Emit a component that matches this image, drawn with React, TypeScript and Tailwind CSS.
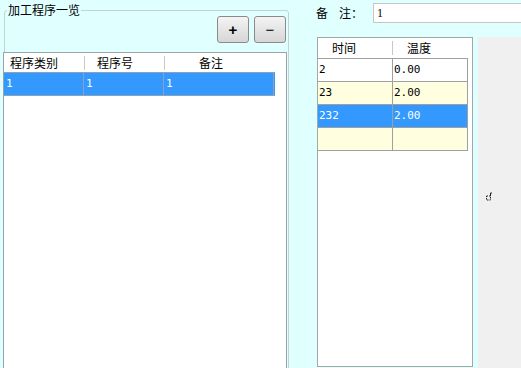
import React from 'react';

const cjk = { fontFamily: '"Noto Sans CJK SC", "Noto Sans", sans-serif' };
const mono = { fontFamily: '"DejaVu Sans Mono", "Liberation Mono", monospace' };

interface TempRow {
  time: string;
  temp: string;
  tone: 'white' | 'yellow' | 'selected';
}

const tempRows: TempRow[] = [
  { time: '2', temp: '0.00', tone: 'white' },
  { time: '23', temp: '2.00', tone: 'yellow' },
  { time: '232', temp: '2.00', tone: 'selected' },
  { time: '', temp: '', tone: 'yellow' },
];

function rowBg(tone: TempRow['tone']) {
  if (tone === 'selected') return 'bg-[#3399ff] text-white';
  if (tone === 'yellow') return 'bg-[#ffffe0] text-black';
  return 'bg-white text-black';
}

function ToolButton({ label, bold }: { label: string; bold?: boolean }) {
  return (
    <button
      className={`w-[32px] h-[27px] rounded-[3px] border border-[#8a8a8a] bg-gradient-to-b from-[#f4f4f4] to-[#d6d6d6] flex items-center justify-center text-[15px] leading-none text-black ${bold ? 'font-bold' : ''}`}
      style={{ fontFamily: '"Liberation Sans", sans-serif' }}
    >
      {label}
    </button>
  );
}

export default function App() {
  return (
    <div className="w-[521px] h-[368px] overflow-hidden bg-[#e0ffff] flex text-[12px] text-black" style={cjk}>
      {/* left: program list group */}
      <div className="w-[290px] shrink-0 pl-[4px] pt-[4px]">
        <fieldset className="m-0 p-0 w-[285px] h-[400px] border border-[#c4d2d2] rounded-[3px]">
          <legend className="ml-[2px] px-[1px] leading-[12px] text-[12px]">加工程序一览</legend>

          <div className="flex justify-end gap-[5px] pr-[2px]">
            <ToolButton label="+" bold />
            <ToolButton label="−" />
          </div>

          <div className="mt-[9px] -ml-[2px] w-[284px] h-[340px] border border-[#9aa4a8] bg-white">
            <div className="flex h-[19px] items-center bg-white">
              <div className="w-[80px] pl-[6px] leading-[19px]">程序类别</div>
              <span className="w-px h-[14px] bg-[#c8c8c8]" />
              <div className="w-[79px] pl-[12px] leading-[19px]">程序号</div>
              <span className="w-px h-[14px] bg-[#c8c8c8]" />
              <div className="w-[109px] pl-[34px] leading-[19px]">备注</div>
            </div>
            <div className="flex w-[271px] h-[24px] bg-[#3399ff] text-white border-y border-[#8aa2bc]" style={mono}>
              <div className="w-[80px] pl-[2px] leading-[22px] border-r border-[#8aa2bc] text-[11px]">1</div>
              <div className="w-[80px] pl-[2px] leading-[22px] border-r border-[#8aa2bc] text-[11px]">1</div>
              <div className="w-[110px] pl-[2px] leading-[22px] border-r border-[#8aa2bc] text-[11px]">1</div>
            </div>
          </div>
        </fieldset>
      </div>

      {/* right: note + temperature table */}
      <div className="flex-1 flex flex-col">
        <div className="flex items-center h-[20px] mt-[3px]">
          <span className="ml-[26px] w-[23px]">备</span>
          <span>注：</span>
          <input
            readOnly
            value="1"
            className="ml-[10px] flex-1 h-[20px] border border-[#c6c6c6] bg-white px-[3px] text-[12px] outline-none"
            style={{ fontFamily: '"Liberation Serif", serif' }}
          />
        </div>

        <div className="flex flex-1 mt-[14px]">
          <div className="ml-[27px] w-[156px] h-[330px] border border-[#a0a8a8] bg-white flex flex-col">
            <div className="w-[150px] flex h-[21px] items-center border-b border-[#a0a0a0]">
              <div className="w-[74px] pl-[14px] leading-[20px]">时间</div>
              <span className="w-px h-[14px] bg-[#c8c8c8]" />
              <div className="w-[75px] pl-[14px] leading-[20px]">温度</div>
            </div>
            {tempRows.map((r, i) => (
              <div key={i} className={`w-[150px] flex h-[23px] border-b border-[#a0a0a0] ${rowBg(r.tone)}`} style={mono}>
                <div className="w-[75px] pl-px leading-[22px] border-r border-[#a0a0a0] text-[11px]">{r.time}</div>
                <div className="w-[75px] pl-px leading-[22px] border-r border-[#a0a0a0] text-[11px]">{r.temp}</div>
              </div>
            ))}
          </div>

          <div className="ml-[5px] flex-1 bg-[#f0f0f0] pl-[7px] pt-[155px]">
            <svg width="8" height="9" viewBox="0 0 8 9" className="block">
              <path d="M1.5 4 h4 v4 h-4 z" fill="none" stroke="#222" strokeWidth="1" strokeDasharray="1.5 1" />
              <path d="M5.5 4 v-3 h1.5" fill="none" stroke="#222" strokeWidth="1" />
            </svg>
          </div>
        </div>
      </div>
    </div>
  );
}
